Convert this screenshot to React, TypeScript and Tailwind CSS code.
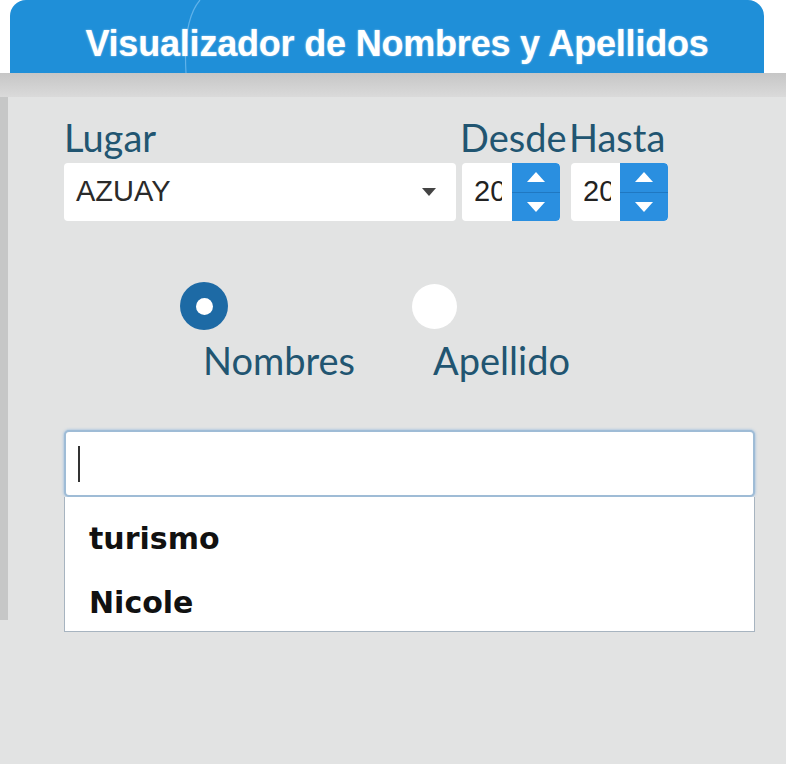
import React from "react";

const Spinner = () => (
  <div className="w-[48px] h-full bg-[#2a8fe0] rounded-r-[4px] flex flex-col">
    <div className="flex-1 flex items-center justify-center border-b border-[#1f78c2]">
      <svg width="18" height="10" viewBox="0 0 18 10">
        <path d="M9 0 L18 10 L0 10 Z" fill="#ffffff" />
      </svg>
    </div>
    <div className="flex-1 flex items-center justify-center">
      <svg width="18" height="10" viewBox="0 0 18 10">
        <path d="M0 0 L18 0 L9 10 Z" fill="#ffffff" />
      </svg>
    </div>
  </div>
);

const NumberBox = ({ label, width }: { label: string; width: string }) => (
  <div className={`${width} flex flex-col`}>
    <span className="whitespace-nowrap text-[38px] leading-[38px] mb-[7px] ml-[-2px] text-[#215571] font-['Lato']">{label}</span>
    <div className="h-[58px] flex bg-white rounded-[4px] overflow-hidden">
      <div className="flex-1 overflow-hidden pl-[12px] flex items-center text-[29px] text-[#222] font-['Liberation_Sans']">
        <span className="block w-[28px] overflow-hidden whitespace-nowrap">2019</span>
      </div>
      <Spinner />
    </div>
  </div>
);

const Radio = ({ label, checked }: { label: string; checked?: boolean }) => (
  <div className="flex flex-col items-start">
    <div className="ml-[-23px] h-[48px] w-[48px] flex items-center justify-center">
      {checked ? (
        <div className="w-[48px] h-[48px] rounded-full bg-[#1d6aa5] flex items-center justify-center">
          <div className="w-[17px] h-[17px] rounded-full bg-white" />
        </div>
      ) : (
        <div className="w-[45px] h-[45px] rounded-full bg-white" />
      )}
    </div>
    <span className="mt-[8px] text-[38px] leading-[44px] text-[#215571] font-['Lato']">{label}</span>
  </div>
);

export default function App() {
  return (
    <div className="w-[800px] h-[764px] bg-white flex flex-col overflow-hidden">
      <div className="relative ml-[10px] w-[754px] h-[73px] shrink-0 rounded-t-[16px] bg-[#1f8fd8] flex items-center justify-center pl-[20px] pt-[14px] overflow-hidden">
        <svg className="absolute left-[160px] top-0" width="40" height="73" viewBox="0 0 40 73">
          <path d="M30 0 C18 14 14 40 16 73" stroke="#5fb2ea" strokeWidth="1.2" fill="none" />
        </svg>
        <span className="relative text-white font-bold text-[36px] leading-none tracking-[-0.2px] font-['Liberation_Sans'] [text-shadow:0_0_2px_rgba(255,255,255,0.6)]">
          Visualizador de Nombres y Apellidos
        </span>
      </div>
      <div className="w-[786px] h-[24px] shrink-0 bg-gradient-to-b from-[#c6c6c6] to-[#dadada]" />
      <div className="w-[786px] flex-1 bg-[#e2e3e3] flex">
        <div className="w-[8px] h-[523px] bg-[#c6c7c7] shrink-0" />
        <div className="flex-1 pl-[56px] pr-[31px] pt-[21px] flex flex-col">
          <div className="flex items-start">
            <div className="w-[392px] flex flex-col">
              <span className="text-[38px] leading-[38px] mb-[7px] text-[#215571] font-['Lato']">Lugar</span>
              <div className="h-[58px] bg-white rounded-[4px] flex items-center pl-[12px] pr-[20px]">
                <span className="flex-1 text-[29px] text-[#2a2a2a] font-['Liberation_Sans']">AZUAY</span>
                <svg width="14" height="8" viewBox="0 0 14 8">
                  <path d="M0 0 L14 0 L7 8 Z" fill="#444" />
                </svg>
              </div>
            </div>
            <div className="ml-[6px]">
              <NumberBox label="Desde" width="w-[98px]" />
            </div>
            <div className="ml-[11px]">
              <NumberBox label="Hasta" width="w-[97px]" />
            </div>
          </div>

          <div className="mt-[61px] flex pl-[139px] gap-[78px]">
            <Radio label="Nombres" checked />
            <Radio label="Apellido" />
          </div>

          <div className="mt-[48px] h-[67px] bg-white rounded-[5px] border-2 border-[#9fbcd6] shadow-[0_0_3px_rgba(80,150,220,0.6)] flex items-center pl-[12px]">
            <div className="w-[2px] h-[36px] bg-[#333]" />
          </div>
          <div className="h-[135px] bg-white border border-[#a7b4c0] border-t-0 flex flex-col pl-[24px] pt-[22px] gap-[24px]">
            <span className="text-[30px] leading-[40px] font-bold text-[#111] font-['DejaVu_Sans']">turismo</span>
            <span className="text-[30px] leading-[40px] font-bold text-[#111] font-['DejaVu_Sans']">Nicole</span>
          </div>
        </div>
      </div>
    </div>
  );
}
